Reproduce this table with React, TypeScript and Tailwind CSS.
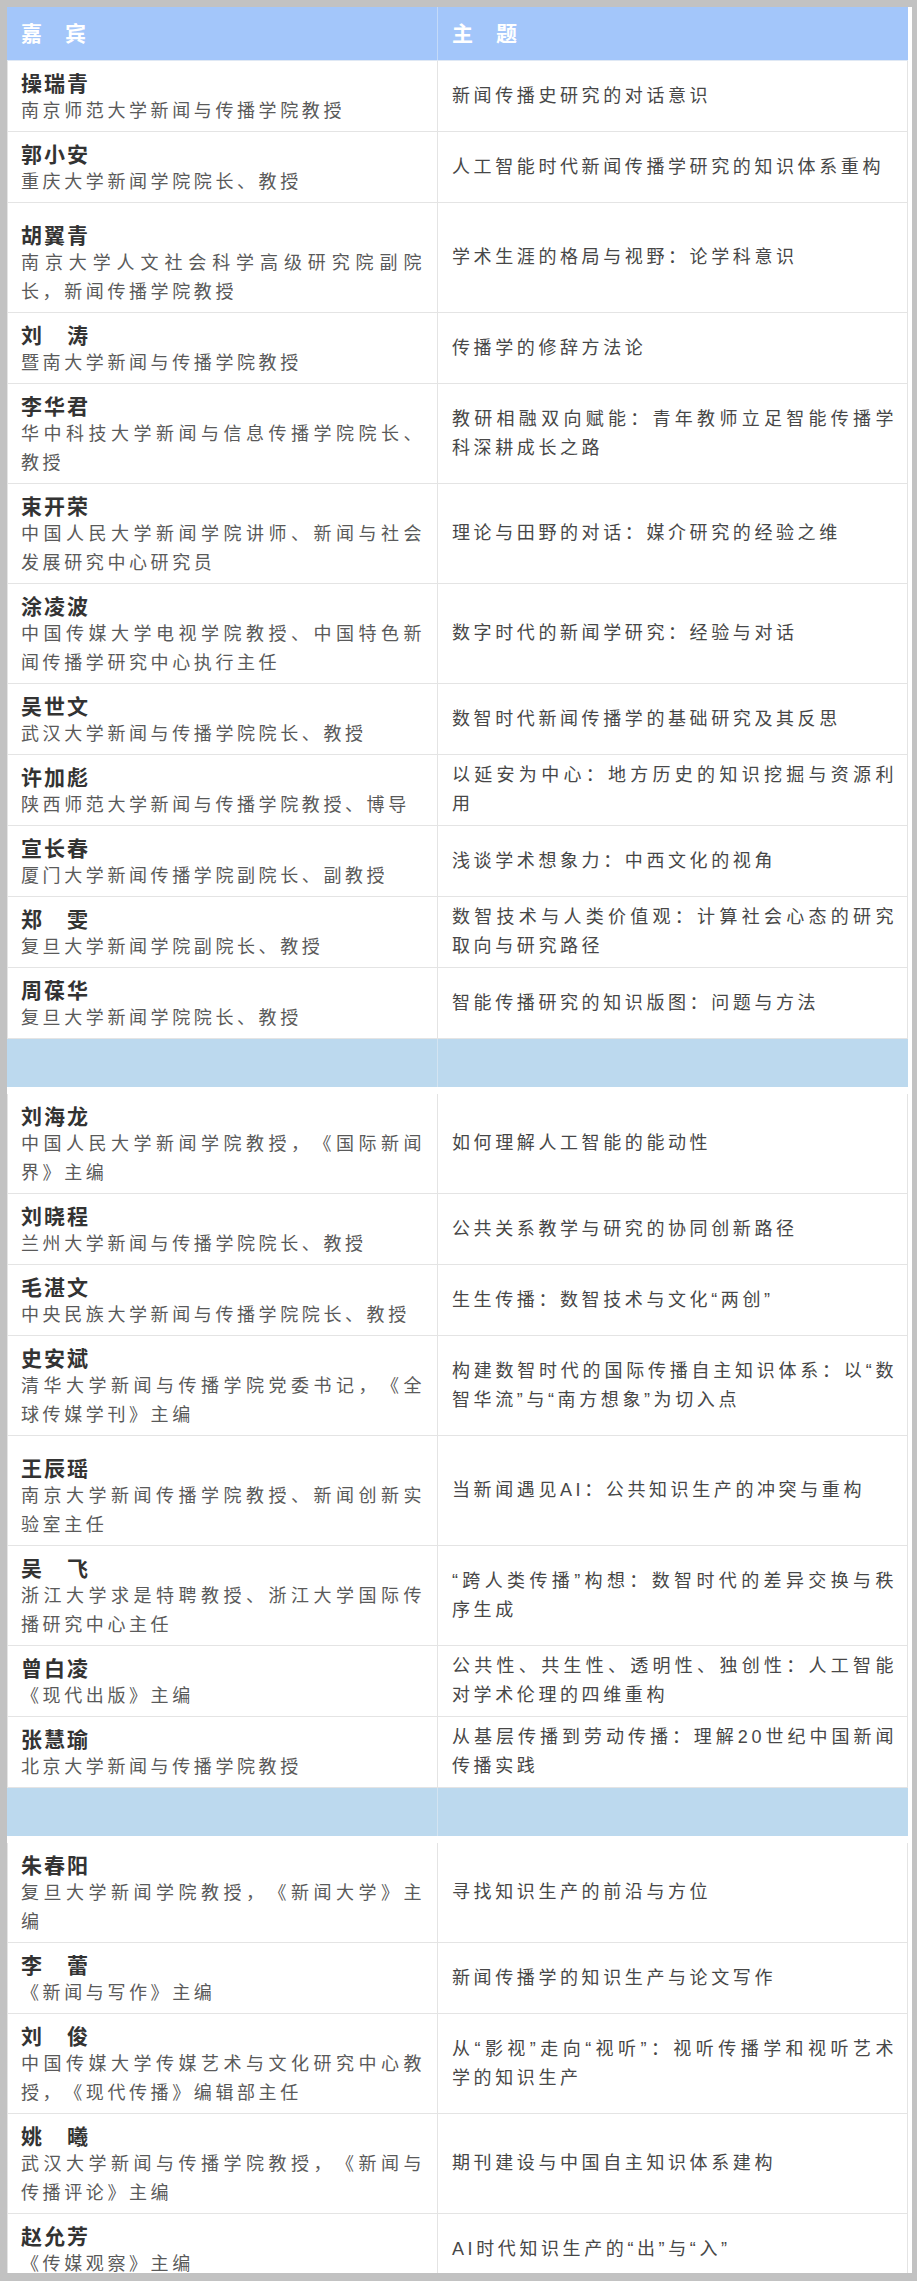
import React from "react";

type Speaker = {
  name: string;
  title: string;
  topic: string;
  tall?: boolean;
};

const groups: Speaker[][] = [
  [
    { name: "操瑞青", title: "南京师范大学新闻与传播学院教授", topic: "新闻传播史研究的对话意识" },
    { name: "郭小安", title: "重庆大学新闻学院院长、教授", topic: "人工智能时代新闻传播学研究的知识体系重构" },
    {
      name: "胡翼青",
      title: "南京大学人文社会科学高级研究院副院长，新闻传播学院教授",
      topic: "学术生涯的格局与视野：论学科意识",
      tall: true,
    },
    { name: "刘　涛", title: "暨南大学新闻与传播学院教授", topic: "传播学的修辞方法论" },
    {
      name: "李华君",
      title: "华中科技大学新闻与信息传播学院院长、教授",
      topic: "教研相融双向赋能：青年教师立足智能传播学科深耕成长之路",
    },
    {
      name: "束开荣",
      title: "中国人民大学新闻学院讲师、新闻与社会发展研究中心研究员",
      topic: "理论与田野的对话：媒介研究的经验之维",
    },
    {
      name: "涂凌波",
      title: "中国传媒大学电视学院教授、中国特色新闻传播学研究中心执行主任",
      topic: "数字时代的新闻学研究：经验与对话",
    },
    { name: "吴世文", title: "武汉大学新闻与传播学院院长、教授", topic: "数智时代新闻传播学的基础研究及其反思" },
    {
      name: "许加彪",
      title: "陕西师范大学新闻与传播学院教授、博导",
      topic: "以延安为中心：地方历史的知识挖掘与资源利用",
    },
    { name: "宣长春", title: "厦门大学新闻传播学院副院长、副教授", topic: "浅谈学术想象力：中西文化的视角" },
    {
      name: "郑　雯",
      title: "复旦大学新闻学院副院长、教授",
      topic: "数智技术与人类价值观：计算社会心态的研究取向与研究路径",
    },
    { name: "周葆华", title: "复旦大学新闻学院院长、教授", topic: "智能传播研究的知识版图：问题与方法" },
  ],
  [
    {
      name: "刘海龙",
      title: "中国人民大学新闻学院教授，《国际新闻界》主编",
      topic: "如何理解人工智能的能动性",
    },
    { name: "刘晓程", title: "兰州大学新闻与传播学院院长、教授", topic: "公共关系教学与研究的协同创新路径" },
    { name: "毛湛文", title: "中央民族大学新闻与传播学院院长、教授", topic: "生生传播：数智技术与文化“两创”" },
    {
      name: "史安斌",
      title: "清华大学新闻与传播学院党委书记，《全球传媒学刊》主编",
      topic: "构建数智时代的国际传播自主知识体系：以“数智华流”与“南方想象”为切入点",
    },
    {
      name: "王辰瑶",
      title: "南京大学新闻传播学院教授、新闻创新实验室主任",
      topic: "当新闻遇见AI：公共知识生产的冲突与重构",
      tall: true,
    },
    {
      name: "吴　飞",
      title: "浙江大学求是特聘教授、浙江大学国际传播研究中心主任",
      topic: "“跨人类传播”构想：数智时代的差异交换与秩序生成",
    },
    {
      name: "曾白凌",
      title: "《现代出版》主编",
      topic: "公共性、共生性、透明性、独创性：人工智能对学术伦理的四维重构",
    },
    {
      name: "张慧瑜",
      title: "北京大学新闻与传播学院教授",
      topic: "从基层传播到劳动传播：理解20世纪中国新闻传播实践",
    },
  ],
  [
    { name: "朱春阳", title: "复旦大学新闻学院教授，《新闻大学》主编", topic: "寻找知识生产的前沿与方位" },
    { name: "李　蕾", title: "《新闻与写作》主编", topic: "新闻传播学的知识生产与论文写作" },
    {
      name: "刘　俊",
      title: "中国传媒大学传媒艺术与文化研究中心教授，《现代传播》编辑部主任",
      topic: "从“影视”走向“视听”：视听传播学和视听艺术学的知识生产",
    },
    {
      name: "姚　曦",
      title: "武汉大学新闻与传播学院教授，《新闻与传播评论》主编",
      topic: "期刊建设与中国自主知识体系建构",
    },
    { name: "赵允芳", title: "《传媒观察》主编", topic: "AI时代知识生产的“出”与“入”" },
  ],
];

const font = "font-['Liberation_Sans','Noto_Sans_CJK_SC',sans-serif]";

const SpeakerRow = ({ s }: { s: Speaker }) => (
  <div className="grid grid-cols-[431px_1fr] border-b border-[#e4e4e4]">
    <div
      className={`border-l border-r border-[#e4e4e4] pl-[13px] pr-[12px] pb-[5px] ${
        s.tall ? "pt-[19px]" : "pt-[9px]"
      }`}
    >
      <div className="text-[21px] leading-[27px] font-bold tracking-[2px] text-[#333333]">{s.name}</div>
      <div className="text-[18px] leading-[29px] tracking-[3.6px] text-[#5a5a5a] text-justify">{s.title}</div>
    </div>
    <div className="flex items-center border-r border-[#e4e4e4] pl-[14px] pr-[10px] py-[6px]">
      <p className="text-[18px] leading-[29px] tracking-[3.6px] text-[#474747] text-justify">{s.topic}</p>
    </div>
  </div>
);

const Divider = () => (
  <>
    <div className="grid grid-cols-[431px_1fr] h-[48px] bg-[#bcd9ee]">
      <div className="border-r border-[#d3e4f1]" />
      <div />
    </div>
    <div className="h-[7px] bg-white" />
  </>
);

export default function App() {
  return (
    <div
      className={`h-[2281px] overflow-hidden bg-[#c2c2c2] pt-[7px] pl-[7px] pr-[5px] pb-[8px] [text-spacing-trim:space-all] ${font}`}
    >
      <div className="h-full overflow-hidden bg-white pr-[4px]">
        <div className="grid grid-cols-[431px_1fr] h-[54px] bg-[#a3c6fa] border-b border-[#dfe8f4]">
          <div className="flex items-center border-r border-[#c4daf8] pl-[14px]">
            <span className="text-[21px] font-bold tracking-[1px] text-white">嘉　宾</span>
          </div>
          <div className="flex items-center pl-[14px]">
            <span className="text-[21px] font-bold tracking-[1px] text-white">主　题</span>
          </div>
        </div>
        {groups.map((g, gi) => (
          <div key={gi}>
            {gi > 0 && <Divider />}
            {g.map((s) => (
              <SpeakerRow key={s.name} s={s} />
            ))}
          </div>
        ))}
      </div>
    </div>
  );
}
